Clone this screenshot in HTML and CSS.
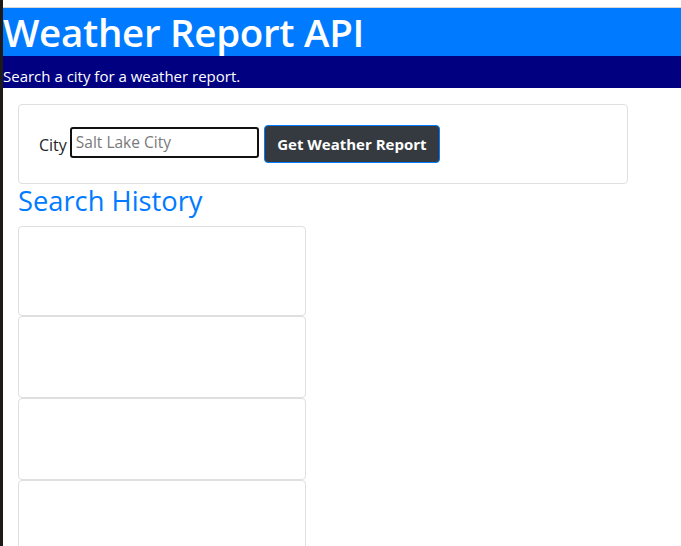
FILE: index.html
```html
<!DOCTYPE html>
<html lang="en">
<head>
<meta charset="utf-8">
<title>Weather Report API</title>
<link rel="stylesheet" href="styles.css">
</head>
<body>
<div class="page">
  <header class="header">
    <h1 class="title">Weather Report API</h1>
    <p class="subtitle">Search a city for a weather report.</p>
  </header>
  <main class="main">
    <section class="search-card">
      <form class="search-form">
        <label class="city-label" for="city">City</label>
        <input class="city-input" id="city" type="text" placeholder="Salt Lake City">
        <button class="search-btn" type="button">Get Weather Report</button>
      </form>
    </section>
    <h3 class="history-title">Search History</h3>
    <div class="history-list">
      <div class="history-card history-card-first"></div>
      <div class="history-card"></div>
      <div class="history-card"></div>
      <div class="history-card"></div>
    </div>
  </main>
</div>
</body>
</html>
```
FILE: styles.css
```css
* { box-sizing: border-box; }
html, body { margin: 0; padding: 0; }
body {
  background: #1d1a17;
  font-family: "Open Sans", "Noto Sans", sans-serif;
  font-size: 16px;
  color: #212529;
  height: 546px;
  overflow: hidden;
}
.page {
  margin-left: 3px;
  background: #fff;
  min-height: 546px;
  padding-top: 7px;
}
.header {
  border-top: 1px solid #d6d6d6;
}
.title {
  margin: 0;
  background: #007bff;
  color: #fff;
  font-size: 38.5px;
  font-weight: 600;
  line-height: 48px;
  height: 48px;
  letter-spacing: -0.3px;
}
.subtitle {
  margin: 0;
  background: #000080;
  color: #fff;
  font-size: 15px;
  line-height: 24px;
  padding-top: 8px;
  height: 32px;
}
.main {
  padding: 16px 0 0 15px;
}
.search-card {
  width: 610px;
  border: 1px solid #dfdfdf;
  border-radius: 4px;
  padding: 20px;
}
.search-form {
  display: flex;
  align-items: center;
  height: 38px;
}
.city-label {
  font-size: 16px;
  color: #212529;
  margin-right: 3px;
  margin-top: 1px;
}
.city-input {
  width: 189px;
  height: 31px;
  margin-bottom: 4px;
  border: 2px solid #111;
  border-radius: 3px;
  padding: 0 4px;
  font-family: "Open Sans", "Noto Sans", sans-serif;
  font-size: 15.5px;
  color: #333;
  outline: none;
}
.city-input::placeholder { color: #7a7a7a; }
.search-btn {
  margin-left: 5px;
  width: 176px;
  height: 38px;
  background: #343a40;
  color: #fff;
  border: 1px solid #007bff;
  border-radius: 4px;
  font-family: "Open Sans", "Noto Sans", sans-serif;
  font-size: 15px;
  font-weight: 700;
  padding: 0;
}
.history-title {
  margin: 0 0 8px;
  color: #007bff;
  font-size: 27.3px;
  font-weight: 500;
  line-height: 34px;
}
.history-list {
  display: flex;
  flex-direction: column;
  width: 288px;
}
.history-card {
  height: 82px;
  border: 1px solid #dfdfdf;
  border-radius: 4px;
}
.history-card-first { height: 90px; }
```
